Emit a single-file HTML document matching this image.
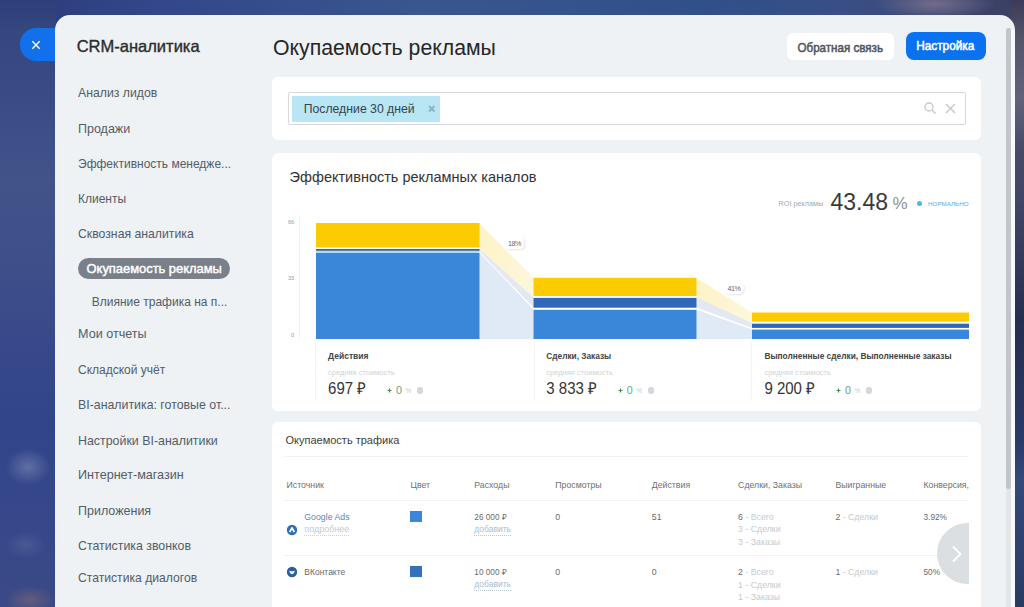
<!DOCTYPE html>
<html><head><meta charset="utf-8">
<style>
*{margin:0;padding:0;box-sizing:border-box}
html,body{width:1024px;height:607px;overflow:hidden}
body{position:relative;font-family:"Liberation Sans",sans-serif;background:#34467f}
.a{position:absolute}
.t{position:absolute;line-height:1;white-space:nowrap}
#bg{left:0;top:0;width:1024px;height:607px;background:
 radial-gradient(ellipse 22px 18px at 28px 467px,rgba(130,145,185,.55),transparent),
 radial-gradient(ellipse 20px 14px at 26px 545px,rgba(110,125,175,.3),transparent),
 radial-gradient(ellipse 25px 14px at 30px 600px,rgba(140,110,110,.5),transparent),
 radial-gradient(ellipse 60px 16px at 935px 4px,rgba(125,115,145,.85),transparent),
 radial-gradient(ellipse 20px 60px at 1020px 60px,rgba(110,100,130,.6),transparent),
 linear-gradient(90deg,#2b3b78 0,#33478a 160px,#3a568e 420px,#30508a 700px,#3a4e84 860px,#3c3e60 1024px)}
#panel{left:54.6px;top:14.6px;width:960.4px;height:600px;background:#eef2f4;border-radius:15px 15px 0 0}
#close{left:19.5px;top:28.4px;width:50px;height:33px;background:#1170ea;border-radius:16px 0 0 16px}
.side{color:#535c69;font-size:12.25px}
.card{position:absolute;background:#fff;border-radius:6px}
</style></head><body>
<div id="bg" class="a"></div>
<div class="a" style="left:0;top:0;width:56px;height:607px;background:
 radial-gradient(ellipse 22px 18px at 28px 467px,rgba(130,145,185,.55),transparent),
 radial-gradient(ellipse 20px 14px at 26px 545px,rgba(110,125,175,.3),transparent),
 radial-gradient(ellipse 25px 14px at 30px 600px,rgba(140,110,110,.5),transparent),
 linear-gradient(180deg,#2e3f7c 0,#34477f 30px,#3a4c86 100px,#42538a 180px,#3e5088 260px,#37498a 340px,#33458a 420px,#36488a 520px,#3a4a86 607px)"></div>
<!-- right dark strip -->
<div class="a" style="left:1012px;top:0;width:12px;height:607px;background:linear-gradient(180deg,#3c3a58 0,#55556a 40px,#62627a 100px,#484a66 150px,#404464 210px,#262e50 320px,#2a3a66 440px,#34487a 480px,#2a3a62 607px)"></div>
<div id="close" class="a"></div>
<svg class="a" style="left:31px;top:40px" width="10" height="10" viewBox="0 0 10 10"><path d="M1.3 1.3L8.7 8.7M8.7 1.3L1.3 8.7" stroke="#fff" stroke-width="1.4"/></svg>
<div id="panel" class="a"></div>
<!-- scrollbar -->
<div class="a" style="left:1006px;top:28px;width:4.7px;height:461px;background:#c2c6c9;border-radius:2px"></div><div class="a" style="left:1010.7px;top:30px;width:4.3px;height:577px;background:#f7f9fc"></div>
<div class="a" style="left:1006px;top:489px;width:5px;height:118px;background:#e2e6e9"></div>

<!-- sidebar -->
<div class="t" style="left:76.7px;top:38px;font-size:16.5px;color:#2b2b2b;-webkit-text-stroke:0.35px #2b2b2b">CRM-аналитика</div>
<div class="t side" style="left:78px;top:87px">Анализ лидов</div>
<div class="t side" style="left:78px;top:122.9px;font-size:12.5px">Продажи</div>
<div class="t side" style="left:78px;top:157.6px;font-size:12px">Эффективность менедже...</div>
<div class="t side" style="left:78px;top:193px;font-size:12px">Клиенты</div>
<div class="t side" style="left:78px;top:227.6px">Сквозная аналитика</div>
<div class="a" style="left:78px;top:258px;width:152px;height:21px;background:#7a8089;border-radius:11px"></div>
<div class="t" style="left:86.6px;top:263.2px;font-size:12.9px;color:#fff;-webkit-text-stroke:0.45px #fff;transform:scaleY(1.04);transform-origin:0 0">Окупаемость рекламы</div>
<div class="t side" style="left:91.7px;top:296.2px;font-size:12px">Влияние трафика на п...</div>
<div class="t side" style="left:78px;top:328.3px;font-size:12.6px">Мои отчеты</div>
<div class="t side" style="left:78px;top:363.8px;font-size:12px">Складской учёт</div>
<div class="t side" style="left:78px;top:399.4px;font-size:12.35px">BI-аналитика: готовые от...</div>
<div class="t side" style="left:78px;top:435px;font-size:12.4px">Настройки BI-аналитики</div>
<div class="t side" style="left:78px;top:469.2px;font-size:12.6px">Интернет-магазин</div>
<div class="t side" style="left:78px;top:504.6px;font-size:12.5px">Приложения</div>
<div class="t side" style="left:78px;top:539.6px;font-size:12.35px">Статистика звонков</div>
<div class="t side" style="left:78px;top:572px;font-size:12.15px">Статистика диалогов</div>

<!-- header -->
<div class="t" style="left:273px;top:37.8px;font-size:21.25px;color:#262626">Окупаемость рекламы</div>
<div class="a" style="left:787px;top:33px;width:107px;height:26.5px;background:#fff;border-radius:6px"></div>
<div class="t" style="left:797.5px;top:40.6px;font-size:11.6px;color:#4f575f;-webkit-text-stroke:0.5px #4f575f;transform:scaleY(1.08);transform-origin:0 0">Обратная связь</div>
<div class="a" style="left:906px;top:32px;width:80px;height:28px;background:#0a71f0;border-radius:8px"></div>
<div class="t" style="left:916.2px;top:40.4px;font-size:11.8px;color:#fff;-webkit-text-stroke:0.5px #fff;transform:scaleY(1.08);transform-origin:0 0">Настройка</div>

<!-- filter card -->
<div class="card" style="left:272.3px;top:77.3px;width:709.2px;height:62.5px"></div>
<div class="a" style="left:288px;top:92px;width:678px;height:33px;border:1px solid #d5d9dd;border-radius:2px;background:#fff"></div>
<div class="a" style="left:291.6px;top:95.5px;width:148.4px;height:26px;background:#b9e6f5"></div>
<div class="t" style="left:303.7px;top:103px;font-size:12.25px;color:#36424c">Последние 30 дней</div>
<svg class="a" style="left:428px;top:105px" width="7.5" height="7.5" viewBox="0 0 7.5 7.5"><path d="M1 1L6.5 6.5M6.5 1L1 6.5" stroke="#8fb1be" stroke-width="1.8"/></svg>
<svg class="a" style="left:923px;top:101px" width="14" height="14" viewBox="0 0 14 14"><circle cx="6" cy="6" r="4" fill="none" stroke="#c3c8cc" stroke-width="1.3"/><path d="M9 9L12.5 12.5" stroke="#c3c8cc" stroke-width="1.5"/></svg>
<svg class="a" style="left:945px;top:103px" width="11" height="11" viewBox="0 0 11 11"><path d="M1 1L10 10M10 1L1 10" stroke="#c3c8cc" stroke-width="1.4"/></svg>

<!-- chart card -->
<div class="card" style="left:272.3px;top:153px;width:709.2px;height:257.5px"></div>
<div class="t" style="left:289.6px;top:169.7px;font-size:14.5px;color:#333">Эффективность рекламных каналов</div>

<!-- ROI -->
<div class="t" style="left:778.6px;top:199.6px;font-size:7.25px;color:#a3a8ad">ROI рекламы</div>
<div class="t" style="left:830.5px;top:191.1px;font-size:23px;color:#3a3a3a">43.48</div>
<div class="t" style="left:892.6px;top:195.1px;font-size:17px;color:#8d9298">%</div>
<div class="a" style="left:917.2px;top:201px;width:5px;height:5px;border-radius:50%;background:#55b4e5"></div>
<div class="t" style="left:928px;top:200.5px;font-size:6.25px;color:#5aa9de">НОРМАЛЬНО</div>
<!-- axis -->
<div class="t" style="left:284px;width:10.3px;text-align:right;top:219.9px;font-size:5.75px;color:#9a9a9a">66</div>
<div class="t" style="left:284px;width:10.3px;text-align:right;top:276.4px;font-size:5.75px;color:#9a9a9a">33</div>
<div class="t" style="left:284px;width:10.3px;text-align:right;top:332.8px;font-size:5.75px;color:#9a9a9a">0</div>
<div class="a" style="left:299px;top:217px;width:1px;height:122px;background:#f0f0f0"></div>
<svg class="a" style="left:0;top:0" width="1024" height="607">
 <defs><linearGradient id="fy" x1="0" x2="1" y1="0" y2="0"><stop offset="0" stop-color="#fdf3c6"/><stop offset="1" stop-color="#fdf7dc"/></linearGradient></defs>
 <polygon points="479,223 533.5,277.8 533.5,297.2 479,248.5" fill="url(#fy)"/>
 <polygon points="479,248.5 533.5,297.2 533.5,307.6 479,251" fill="#e4e8f1"/>
 <polygon points="479,252.2 533.5,309.6 533.5,339 479,339" fill="#dfeaf6"/>
 <polygon points="696.5,278 752,312.5 752,323 696.5,297" fill="url(#fy)"/>
 <polygon points="696.5,297 752,323 752,328 696.5,307.6" fill="#e4e8f1"/>
 <polygon points="696.5,309.8 752,329.6 752,339 696.5,339" fill="#dfeaf6"/>
 <!-- bar1 -->
 <rect x="316" y="223" width="163.5" height="24.5" fill="#fdcb02"/>
 <rect x="316" y="249.1" width="163.5" height="1.7" fill="#34506e"/>
 <rect x="316" y="250.8" width="163.5" height="2.2" fill="#a9dcf8"/>
 <rect x="316" y="253" width="163.5" height="86" fill="#3a87d9"/>
 <!-- bar2 -->
 <rect x="533.5" y="277.8" width="163" height="18.2" fill="#fdcb02"/>
 <rect x="533.5" y="297.9" width="163" height="9.8" fill="#3068b6"/>
 <rect x="533.5" y="309.8" width="163" height="29.2" fill="#3a87d9"/>
 <!-- bar3 -->
 <rect x="752" y="312.5" width="217" height="9.1" fill="#fdcb02"/>
 <rect x="752" y="323.7" width="217" height="4.2" fill="#3068b6"/>
 <rect x="752" y="329.6" width="217" height="9.4" fill="#3a87d9"/>
</svg>
<div class="a" style="left:505px;top:236px;width:19px;height:12.5px;background:#fff;border-radius:4px;box-shadow:1px 1px 2px rgba(0,0,0,.10)"></div>
<div class="t" style="left:504px;width:21px;text-align:center;top:239.7px;font-size:7.2px;letter-spacing:-0.5px;color:#6a6a6a">18%</div>
<div class="a" style="left:724px;top:281.5px;width:19.5px;height:12.5px;background:#fff;border-radius:6px;box-shadow:1px 1px 2px rgba(0,0,0,.10)"></div>
<div class="t" style="left:723.5px;width:21px;text-align:center;top:284.8px;font-size:7.2px;letter-spacing:-0.5px;color:#6a6a6a">41%</div>
<!-- separators -->
<div class="a" style="left:314.5px;top:342px;width:1px;height:58px;background:#f2f3f4"></div>
<div class="a" style="left:533.5px;top:342px;width:1px;height:58px;background:#f2f3f4"></div>
<div class="a" style="left:751px;top:342px;width:1px;height:58px;background:#f2f3f4"></div>
<div class="t" style="left:328.1px;top:352px;font-size:8.5px;font-weight:bold;color:#444">Действия</div>
<div class="t" style="left:328.1px;top:368.9px;font-size:7.5px;color:#d0d3d6">средняя стоимость</div>
<div class="t" style="left:328.1px;top:380.2px;font-size:15px;color:#353535;transform:scaleY(1.09);transform-origin:0 0">697 ₽</div>
<svg class="a" style="left:387.1px;top:388px" width="5" height="5" viewBox="0 0 5 5"><path d="M2.5 0.5V4.5M0.5 2.5H4.5" stroke="#3f8f5a" stroke-width="1.2"/></svg>
<div class="t" style="left:396.1px;top:385.3px;font-size:10.7px;color:#6aa37e">0</div>
<div class="t" style="left:405.6px;top:388.3px;font-size:6.5px;color:#c8cbce">%</div>
<div class="a" style="left:417.1px;top:387.4px;width:6.2px;height:6.2px;border-radius:50%;background:#d3d6da"></div>
<div class="t" style="left:546.3px;top:352px;font-size:8.3px;font-weight:bold;color:#444">Сделки, Заказы</div>
<div class="t" style="left:546.3px;top:368.9px;font-size:7.5px;color:#d0d3d6">средняя стоимость</div>
<div class="t" style="left:546.3px;top:380.2px;font-size:15px;color:#353535;transform:scaleY(1.09);transform-origin:0 0">3 833 ₽</div>
<svg class="a" style="left:617.8px;top:388px" width="5" height="5" viewBox="0 0 5 5"><path d="M2.5 0.5V4.5M0.5 2.5H4.5" stroke="#3f8f5a" stroke-width="1.2"/></svg>
<div class="t" style="left:626.8px;top:385.3px;font-size:10.7px;color:#6aa37e">0</div>
<div class="t" style="left:636.3px;top:388.3px;font-size:6.5px;color:#c8cbce">%</div>
<div class="a" style="left:647.8px;top:387.4px;width:6.2px;height:6.2px;border-radius:50%;background:#d3d6da"></div>
<div class="t" style="left:764.4px;top:352px;font-size:8.35px;font-weight:bold;color:#444">Выполненные сделки, Выполненные заказы</div>
<div class="t" style="left:764.4px;top:368.9px;font-size:7.5px;color:#d0d3d6">средняя стоимость</div>
<div class="t" style="left:764.4px;top:380.2px;font-size:15px;color:#353535;transform:scaleY(1.09);transform-origin:0 0">9 200 ₽</div>
<svg class="a" style="left:835.9px;top:388px" width="5" height="5" viewBox="0 0 5 5"><path d="M2.5 0.5V4.5M0.5 2.5H4.5" stroke="#3f8f5a" stroke-width="1.2"/></svg>
<div class="t" style="left:844.9px;top:385.3px;font-size:10.7px;color:#6aa37e">0</div>
<div class="t" style="left:854.4px;top:388.3px;font-size:6.5px;color:#c8cbce">%</div>
<div class="a" style="left:865.9px;top:387.4px;width:6.2px;height:6.2px;border-radius:50%;background:#d3d6da"></div>

<!-- table card -->
<div class="card" style="left:272.3px;top:421.5px;width:709.2px;height:200px"></div>
<div class="t" style="left:285.5px;top:434.5px;font-size:11px;color:#3e3e3e">Окупаемость трафика</div>
<div class="a" style="left:284.5px;top:456px;width:683px;height:1px;background:#eef0f2"></div>
<div class="a" style="left:284px;top:500px;width:685px;height:1px;background:#f0f2f4"></div>
<div class="a" style="left:284px;top:554.5px;width:685px;height:1px;background:#f0f2f4"></div>
<div class="t" style="left:286.5px;top:481.2px;font-size:8.75px;color:#707070">Источник</div>
<div class="t" style="left:410.5px;top:481.2px;font-size:8.75px;color:#707070">Цвет</div>
<div class="t" style="left:474.3px;top:481.2px;font-size:8.75px;color:#707070">Расходы</div>
<div class="t" style="left:555.3px;top:481.2px;font-size:8.75px;color:#707070">Просмотры</div>
<div class="t" style="left:651.8px;top:481.2px;font-size:8.75px;color:#707070">Действия</div>
<div class="t" style="left:738.1px;top:481.2px;font-size:8.75px;color:#707070">Сделки, Заказы</div>
<div class="t" style="left:835.4px;top:481.2px;font-size:8.75px;color:#707070">Выигранные</div>
<div class="t" style="left:923.5px;top:481.2px;font-size:8.75px;color:#707070">Конверсия,</div>

<div class="t" style="left:304.3px;top:513.1px;font-size:8.75px;color:#6585b0">Google Ads</div>
<div class="t" style="left:304.3px;top:525.2px;font-size:9px;color:#c3cad2;border-bottom:1px dotted #c9d1d9;padding-bottom:1px">подробнее</div>
<div class="t" style="left:304.3px;top:568px;font-size:8.5px;color:#6a6a6a">ВКонтакте</div>
<svg class="a" style="left:286px;top:524px" width="12" height="12" viewBox="0 0 12 12"><circle cx="6" cy="6" r="5.2" fill="#3470b2"/><path d="M3.7 8L6 3.8L8.3 8" fill="none" stroke="#fff" stroke-width="1.7" stroke-linejoin="round"/></svg>
<svg class="a" style="left:286px;top:566px" width="12" height="12" viewBox="0 0 12 12"><circle cx="6" cy="6" r="5.2" fill="#2f5e9e"/><path d="M3.2 4.8Q6 5.6 8.8 4.8Q8 8.2 6 8.2Q4 8.2 3.2 4.8Z" fill="#e8f2fb"/></svg>
<div class="a" style="left:410.2px;top:510.6px;width:12.3px;height:11.7px;background:#3a87d9"></div>
<div class="a" style="left:410.2px;top:565.7px;width:12.3px;height:11.7px;background:#3570c0"></div>
<div class="t" style="left:474.3px;top:514px;font-size:8.25px;color:#6a6a6a">26 000 ₽</div>
<div class="t" style="left:474.3px;top:525px;font-size:8.5px;color:#a9bcd0;border-bottom:1px dotted #b8c6d6;padding-bottom:1px">добавить</div>
<div class="t" style="left:474.3px;top:569px;font-size:8.25px;color:#6a6a6a">10 000 ₽</div>
<div class="t" style="left:474.3px;top:580px;font-size:8.5px;color:#a9bcd0;border-bottom:1px dotted #b8c6d6;padding-bottom:1px">добавить</div>
<div class="t" style="left:555.3px;top:513.1px;font-size:8.75px;color:#6a6a6a">0</div>
<div class="t" style="left:555.3px;top:568px;font-size:8.75px;color:#6a6a6a">0</div>
<div class="t" style="left:651.8px;top:513.1px;font-size:8.75px;color:#6a6a6a">51</div>
<div class="t" style="left:651.8px;top:568px;font-size:8.75px;color:#6a6a6a">0</div>
<div class="t" style="left:738.1px;top:513.1px;font-size:8.75px;color:#6a6a6a">6 <span style="color:#c5cad0">- Всего</span></div>
<div class="t" style="left:738.1px;top:525.3px;font-size:8.75px;color:#c5cad0">3 - Сделки</div>
<div class="t" style="left:738.1px;top:537.9px;font-size:8.75px;color:#c5cad0">3 - Заказы</div>
<div class="t" style="left:738.1px;top:568.3px;font-size:8.75px;color:#6a6a6a">2 <span style="color:#c5cad0">- Всего</span></div>
<div class="t" style="left:738.1px;top:580.5px;font-size:8.75px;color:#c5cad0">1 - Сделки</div>
<div class="t" style="left:738.1px;top:593.1px;font-size:8.75px;color:#c5cad0">1 - Заказы</div>
<div class="t" style="left:835.4px;top:513.1px;font-size:8.75px;color:#6a6a6a">2 <span style="color:#c5cad0">- Сделки</span></div>
<div class="t" style="left:835.4px;top:568px;font-size:8.75px;color:#6a6a6a">1 <span style="color:#c5cad0">- Сделки</span></div>
<div class="t" style="left:923.5px;top:514px;font-size:8.25px;color:#6a6a6a">3.92%</div>
<div class="t" style="left:923.5px;top:569px;font-size:8.25px;color:#6a6a6a">50%</div>
<div class="a" style="left:969px;top:458px;width:12px;height:149px;background:#fff"></div>
<div class="a" style="left:937px;top:523px;width:32px;height:61px;overflow:hidden"><div style="position:absolute;left:0;top:0;width:61px;height:61px;border-radius:50%;background:#dcdfe2"></div>
<svg style="position:absolute;left:14px;top:22px" width="12" height="18" viewBox="0 0 12 18"><path d="M2 1.5L9.5 9L2 16.5" fill="none" stroke="#fff" stroke-width="1.8"/></svg></div>
</body></html>
